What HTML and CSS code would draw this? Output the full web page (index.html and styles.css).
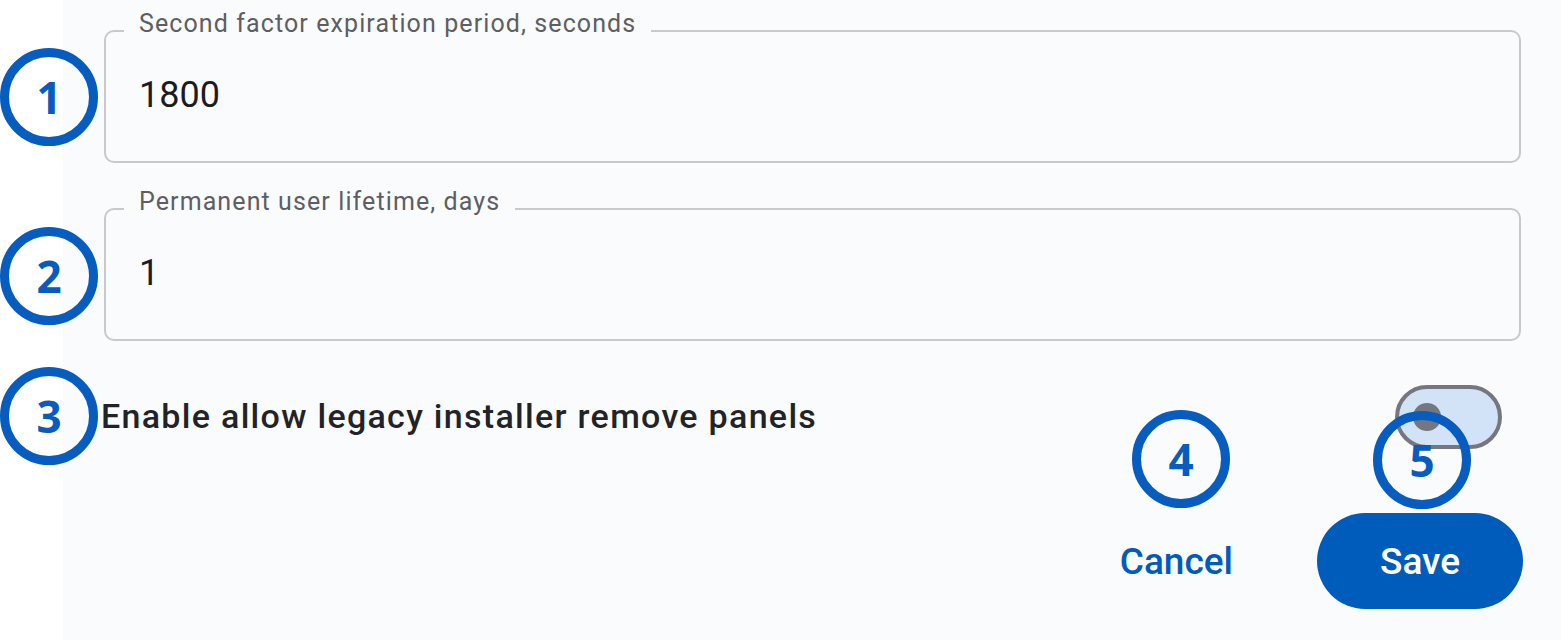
FILE: index.html
```html
<!DOCTYPE html>
<html lang="en">
<head>
<meta charset="utf-8">
<title>Settings</title>
<link rel="stylesheet" href="styles.css">
</head>
<body>
<div class="page">
  <div class="gutter"></div>
  <main class="panel">
    <fieldset class="field">
      <legend class="field-label">Second factor expiration period, seconds</legend>
      <div class="field-value">1800</div>
    </fieldset>
    <fieldset class="field field-second">
      <legend class="field-label">Permanent user lifetime, days</legend>
      <div class="field-value">1</div>
    </fieldset>
    <div class="toggle-row">
      <span class="toggle-text">Enable allow legacy installer remove panels</span>
      <span class="toggle"><span class="toggle-knob"></span></span>
    </div>
    <div class="actions">
      <button class="btn btn-text" type="button">Cancel</button>
      <button class="btn btn-filled" type="button">Save</button>
    </div>
  </main>

  <div class="callout callout-1">1</div>
  <div class="callout callout-2">2</div>
  <div class="callout callout-3">3</div>
  <div class="callout callout-4">4</div>
  <div class="callout callout-5">5</div>
</div>
</body>
</html>
```
FILE: styles.css
```css
* { box-sizing: border-box; }

html, body {
  margin: 0;
  padding: 0;
  background: #ffffff;
}

body {
  font-family: Roboto, "Liberation Sans", Arial, sans-serif;
  width: 1561px;
  height: 640px;
  overflow: hidden;
}

.page {
  position: relative;
  display: flex;
  height: 640px;
}

.gutter {
  width: 63px;
  flex: none;
  background: #ffffff;
}

.panel {
  flex: 1;
  background: #fafbfd;
  padding: 10px 40px 0 41px;
  display: flex;
  flex-direction: column;
}

.field {
  margin: 0;
  padding: 24px 0 47px 33px;
  border: 2px solid #c8c9cd;
  border-radius: 10px;
  min-width: 0;
}

.field-second {
  margin-top: 25px;
}

.field-label {
  margin-left: -15px;
  padding: 0 15px 14px 15px;
  font-size: 25px;
  letter-spacing: 1.1px;
  line-height: 28px;
  color: #5d5e63;
  font-weight: 400;
}

.field-value {
  font-size: 36px;
  line-height: 38px;
  color: #1c1c20;
}

.toggle-row {
  margin-top: 43px;
  height: 66px;
  display: flex;
  align-items: center;
  justify-content: space-between;
}

.toggle-text {
  margin-left: -3px;
  margin-top: -3px;
  font-size: 34px;
  letter-spacing: 1.3px;
  font-weight: 500;
  line-height: 38px;
  color: #222327;
}

.toggle {
  position: relative;
  width: 107px;
  height: 64px;
  margin-right: 19px;
  border: 4px solid #74777f;
  border-radius: 32px;
  background: #d3e3f7;
  display: flex;
  align-items: center;
  padding-left: 14px;
}

.toggle-knob {
  width: 28px;
  height: 28px;
  border-radius: 50%;
  background: #74777f;
}

.actions {
  margin-top: 63px;
  display: flex;
  justify-content: flex-end;
  align-items: center;
  gap: 60px;
  margin-right: -2px;
}

.btn {
  font-family: Roboto, "Liberation Sans", Arial, sans-serif;
  font-weight: 500;
  font-size: 37px;
  border: none;
  cursor: pointer;
  height: 96px;
  border-radius: 48px;
}

.btn-text {
  background: transparent;
  color: #005cbb;
  padding: 0 24px;
}

.btn-filled {
  width: 206px;
  background: #005cbb;
  color: #ffffff;
  padding: 0;
}

/* annotation callouts overlaying the screenshot */
.callout {
  position: absolute;
  width: 98px;
  height: 98px;
  border: 9px solid #075cbf;
  border-radius: 50%;
  display: flex;
  align-items: center;
  justify-content: center;
  font-family: "Open Sans", "DejaVu Sans", sans-serif;
  font-weight: 700;
  font-size: 44px;
  line-height: 1;
  color: #075cbf;
  background: transparent;
}

.callout-1 { left: 0; top: 48px; }
.callout-2 { left: 0; top: 227px; }
.callout-3 { left: 0; top: 367px; }
.callout-4 { left: 1132px; top: 410px; }
.callout-5 { left: 1373px; top: 411px; }
```
